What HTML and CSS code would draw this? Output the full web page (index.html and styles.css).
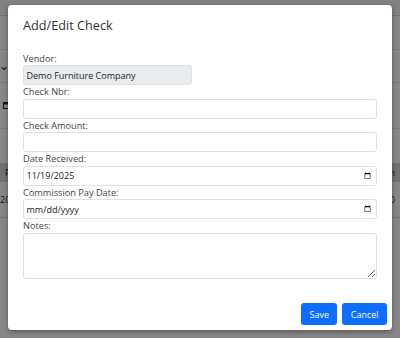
FILE: index.html
```html
<!DOCTYPE html>
<html lang="en">
<head>
<meta charset="utf-8">
<title>Add/Edit Check</title>
<link rel="stylesheet" href="styles.css">
</head>
<body>
<div class="page">
  <div class="topbar"></div>
  <div class="section section-a"></div>
  <div class="section section-b"><span class="chev">&#8964;</span></div>
  <div class="section section-c">
    <svg class="cal" width="6" height="8" viewBox="0 0 6 8"><rect x="0.5" y="1.5" width="5" height="6" fill="none" stroke="#222" stroke-width="1"/><rect x="0.5" y="1.5" width="5" height="2" fill="#222"/></svg>
  </div>
  <div class="table">
    <div class="thead"><span class="c1">Pay Date</span><span class="c2">Column</span></div>
    <div class="trow"><span class="c1 c0">2025</span><span class="c2">0.00</span></div>
  </div>
</div>
<div class="backdrop"></div>
<div class="modal">
  <div class="modal-header">
    <h5 class="modal-title">Add/Edit Check</h5>
  </div>
  <div class="modal-body">
    <label class="field-label">Vendor:</label>
    <input class="control control-short" type="text" value="Demo Furniture Company" readonly>
    <label class="field-label">Check Nbr:</label>
    <input class="control" type="text">
    <label class="field-label">Check Amount:</label>
    <input class="control" type="text">
    <label class="field-label">Date Received:</label>
    <input class="control control-date" type="date" value="2025-11-19">
    <label class="field-label">Commission Pay Date:</label>
    <input class="control control-date" type="date">
    <label class="field-label">Notes:</label>
    <textarea class="control control-area"></textarea>
  </div>
  <div class="modal-footer">
    <button class="btn" type="button">Save</button>
    <button class="btn" type="button">Cancel</button>
  </div>
</div>
</body>
</html>
```
FILE: styles.css
```css
* { box-sizing: border-box; }
html, body { margin: 0; }
body {
  width: 400px;
  height: 338px;
  overflow: hidden;
  position: relative;
  background: #fff;
  font-family: "Open Sans", "Noto Sans", sans-serif;
}
.page { display: flex; flex-direction: column; }
.topbar { height: 16px; background: #f3f3f3; border-bottom: 1px solid #d6d6d6; }
.section { border-bottom: 1px solid #e2e2e2; position: relative; }
.section-a { height: 34px; }
.section-b { height: 33px; padding-top: 10px; }
.chev { font-size: 12px; line-height: 12px; color: #222; display: block; margin-left: -1px; }
.section-c { height: 46px; padding: 18px 0 0 3px; }
.cal { display: block; }
.table { margin-top: 34px; font-size: 9px; color: #222; }
.thead { height: 19px; background: #d8d8d8; display: flex; justify-content: space-between; align-items: center; padding: 0 5px 0 5px; }
.trow { height: 36px; display: flex; justify-content: space-between; align-items: center; padding: 0 5px 0 0; border-bottom: 1px solid #ddd; }
.c2 { white-space: nowrap; }
.backdrop { position: absolute; inset: 0; background: rgba(0, 0, 0, 0.47); }
.modal {
  position: absolute;
  top: 5px;
  left: 8px;
  width: 384px;
  background: #fff;
  border-radius: 4px;
  box-shadow: 0 2px 5px rgba(0, 0, 0, 0.35);
  display: flex;
  flex-direction: column;
}
.modal-header { padding: 12px 15px 10px; }
.modal-title {
  margin: 0;
  font-size: 12.7px;
  line-height: 17px;
  font-weight: 400;
  color: #333;
}
.modal-body { padding: 7.5px 15px 19.5px; display: flex; flex-direction: column; }
.field-label {
  display: block;
  font-size: 9.2px;
  line-height: 13.5px;
  color: #444;
}
.control {
  display: block;
  width: 354px;
  height: 20px;
  margin: 0;
  border: 1px solid #dde1e6;
  border-radius: 3px;
  font-family: "Open Sans", "Noto Sans", sans-serif;
  font-size: 9px;
  padding: 0 2.5px;
  color: #222;
  background: #fff;
  outline: none;
}
.control-short { width: 169px; background: #e9ecef; }
.control-area { height: 46px; resize: both; }
.control-date::-webkit-datetime-edit-fields-wrapper { padding: 0; }
.control-date::-webkit-datetime-edit-text { padding: 0; }
.control-date::-webkit-datetime-edit-month-field,
.control-date::-webkit-datetime-edit-day-field,
.control-date::-webkit-datetime-edit-year-field { padding: 0; }
.control-date::-webkit-calendar-picker-indicator {
  width: 7px;
  height: 8px;
  padding: 0;
  margin-right: 3px;
}
.modal-footer { display: flex; justify-content: flex-end; gap: 5px; padding: 5px; }
.btn {
  height: 22px;
  padding: 0 8.4px;
  border: 0;
  border-radius: 3px;
  background: #0d6efd;
  color: #fff;
  font-family: "Open Sans", "Noto Sans", sans-serif;
  font-size: 9px;
}
```
